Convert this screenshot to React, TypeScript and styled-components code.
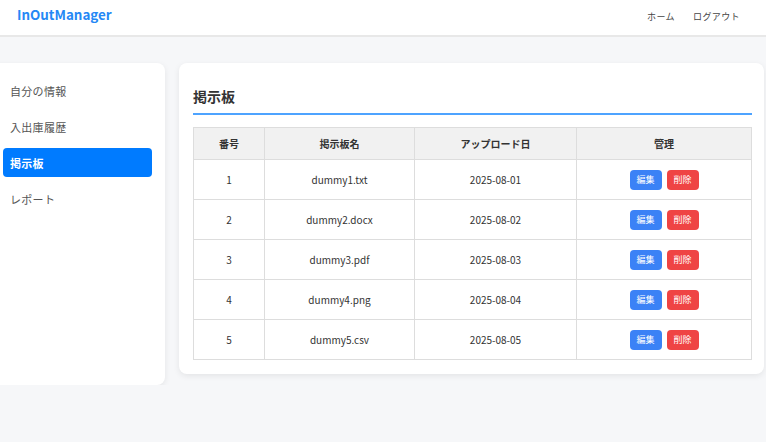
import React from "react";
import styled, { createGlobalStyle } from "styled-components";

const Global = createGlobalStyle`
  html, body { margin: 0; padding: 0; background: #f6f7f9; overflow: hidden; }
  body { font-family: "Noto Sans CJK JP", "Noto Sans", sans-serif; color: #333; }
  * { box-sizing: border-box; }
`;

const Header = styled.header`
  height: 37px;
  background: #fff;
  border-bottom: 2px solid #e8e8e8;
  display: flex;
  align-items: center;
  justify-content: space-between;
  padding: 0 26px 8px 17px;
`;

const Logo = styled.div`
  font-family: "Noto Sans CJK JP", "Noto Sans", sans-serif;
  font-weight: 700;
  font-size: 13.4px;
  color: #2588f5;
`;

const Nav = styled.nav`
  display: flex;
  gap: 18px;
  font-size: 9px;
  letter-spacing: 0.4px;
  color: #444;
  padding-top: 5px;
`;

const Layout = styled.div`
  display: flex;
  align-items: flex-start;
  gap: 14px;
  margin-left: -10px;
  padding: 26px 2px 0 0;
`;

const Sidebar = styled.aside`
  width: 175px;
  height: 322px;
  flex-shrink: 0;
  background: #fff;
  border-radius: 8px;
  box-shadow: 0 2px 6px rgba(0, 0, 0, 0.08);
  padding: 13px;
  display: flex;
  flex-direction: column;
  gap: 7px;
`;

const NavItem = styled.div<{ $active?: boolean }>`
  height: 29px;
  display: flex;
  align-items: center;
  padding-left: 7px;
  border-radius: 4px;
  font-size: 11px;
  letter-spacing: 0.3px;
  font-weight: ${(p) => (p.$active ? 700 : 400)};
  color: ${(p) => (p.$active ? "#fff" : "#555")};
  background: ${(p) => (p.$active ? "#007bff" : "transparent")};
`;

const Main = styled.main`
  flex: 1;
  background: #fff;
  border-radius: 8px;
  box-shadow: 0 2px 6px rgba(0, 0, 0, 0.08);
  padding: 14px 12px 14px 14px;
`;

const Title = styled.h2`
  margin: 0;
  padding: 9px 0 7px;
  line-height: 20px;
  font-size: 14px;
  font-weight: 700;
  color: #333;
  border-bottom: 2px solid #4da3ff;
`;

const Table = styled.table`
  margin-top: 12px;
  width: 100%;
  border-collapse: collapse;
  table-layout: fixed;
  font-size: 10px;
  color: #333;
`;

const Th = styled.th`
  height: 32px;
  background: #f1f1f1;
  border: 1px solid #dddddd;
  font-weight: 700;
  text-align: center;
  padding: 0;
`;

const Td = styled.td`
  height: 40px;
  border: 1px solid #dddddd;
  text-align: center;
  padding: 0;
`;

const Actions = styled.div`
  display: flex;
  justify-content: center;
  gap: 5px;
`;

const Button = styled.button<{ $variant: "edit" | "delete" }>`
  width: 32px;
  height: 20px;
  border: none;
  border-radius: 4px;
  padding: 0;
  font-family: inherit;
  font-size: 9px;
  color: #fff;
  background: ${(p) => (p.$variant === "edit" ? "#3b82f6" : "#ef4444")};
`;

const rows = [
  { id: 1, name: "dummy1.txt", date: "2025-08-01" },
  { id: 2, name: "dummy2.docx", date: "2025-08-02" },
  { id: 3, name: "dummy3.pdf", date: "2025-08-03" },
  { id: 4, name: "dummy4.png", date: "2025-08-04" },
  { id: 5, name: "dummy5.csv", date: "2025-08-05" },
];

export default function App() {
  return (
    <>
      <Global />
      <Header>
        <Logo>InOutManager</Logo>
        <Nav>
          <span>ホーム</span>
          <span>ログアウト</span>
        </Nav>
      </Header>
      <Layout>
        <Sidebar>
          <NavItem>自分の情報</NavItem>
          <NavItem>入出庫履歴</NavItem>
          <NavItem $active>掲示板</NavItem>
          <NavItem>レポート</NavItem>
        </Sidebar>
        <Main>
          <Title>掲示板</Title>
          <Table>
            <colgroup>
              <col style={{ width: "71px" }} />
              <col style={{ width: "150px" }} />
              <col style={{ width: "162px" }} />
              <col />
            </colgroup>
            <thead>
              <tr>
                <Th>番号</Th>
                <Th>掲示板名</Th>
                <Th>アップロード日</Th>
                <Th>管理</Th>
              </tr>
            </thead>
            <tbody>
              {rows.map((r) => (
                <tr key={r.id}>
                  <Td>{r.id}</Td>
                  <Td>{r.name}</Td>
                  <Td>{r.date}</Td>
                  <Td>
                    <Actions>
                      <Button $variant="edit">編集</Button>
                      <Button $variant="delete">削除</Button>
                    </Actions>
                  </Td>
                </tr>
              ))}
            </tbody>
          </Table>
        </Main>
      </Layout>
    </>
  );
}
